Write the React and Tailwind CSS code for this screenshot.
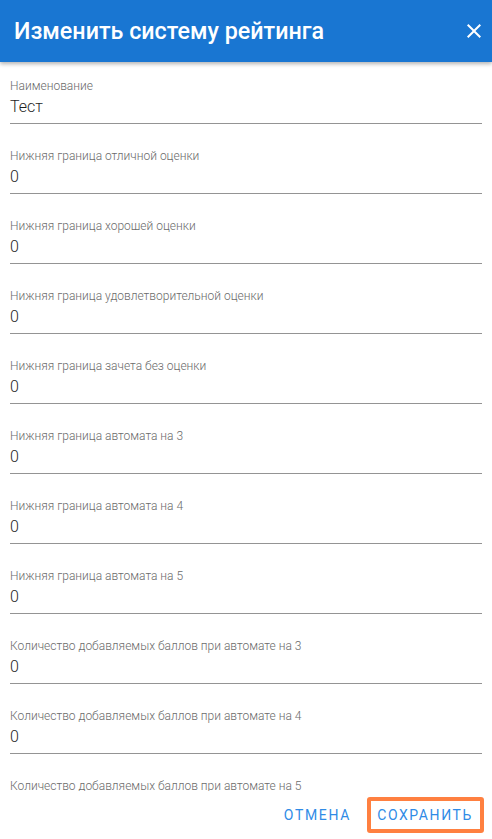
import React from 'react';

const fields = [
  { label: 'Наименование', value: 'Тест' },
  { label: 'Нижняя граница отличной оценки', value: '0' },
  { label: 'Нижняя граница хорошей оценки', value: '0' },
  { label: 'Нижняя граница удовлетворительной оценки', value: '0' },
  { label: 'Нижняя граница зачета без оценки', value: '0' },
  { label: 'Нижняя граница автомата на 3', value: '0' },
  { label: 'Нижняя граница автомата на 4', value: '0' },
  { label: 'Нижняя граница автомата на 5', value: '0' },
  { label: 'Количество добавляемых баллов при автомате на 3', value: '0' },
  { label: 'Количество добавляемых баллов при автомате на 4', value: '0' },
  { label: 'Количество добавляемых баллов при автомате на 5', value: '0' },
];

function Field({ label, value }) {
  return (
    <div className="flex flex-col">
      <label className="text-[12px] leading-[14px] font-light text-[#6b6b6b]">{label}</label>
      <div className="mt-[4px] pb-[7px] text-[16px] leading-[19px] font-light text-[#1f1f1f] border-b border-[#949494]">
        {value}
      </div>
    </div>
  );
}

export default function App() {
  return (
    <div className="h-[839px] w-[492px] flex flex-col bg-white overflow-hidden font-['Roboto',sans-serif]">
      <header className="relative z-10 h-[62px] shrink-0 flex items-center justify-between pl-[14px] pr-[6px] bg-[#1976d2] shadow-[0_2px_4px_rgba(0,0,0,0.3)]">
        <h1 className="text-[23.3px] font-medium text-white">Изменить систему рейтинга</h1>
        <button className="w-[24px] h-[24px] flex items-center justify-center text-white">
          <svg width="24" height="24" viewBox="0 0 24 24" fill="currentColor">
            <path d="M19 6.41L17.59 5 12 10.59 6.41 5 5 6.41 10.59 12 5 17.59 6.41 19 12 13.41 17.59 19 19 17.59 13.41 12z" />
          </svg>
        </button>
      </header>

      <div className="flex-1 overflow-hidden px-[10px] pt-[17px]">
        <div className="flex flex-col gap-[25px]">
          {fields.map(f => (
            <Field key={f.label} label={f.label} value={f.value} />
          ))}
        </div>
      </div>

      <div className="h-[48px] shrink-0 flex items-center justify-end gap-[8px] pr-[8px]">
        <button className="h-[36px] px-[8px] text-[14px] font-normal tracking-[1.7px] uppercase text-[#2f8be6]">
          Отмена
        </button>
        <button className="h-[36px] pl-[6px] pr-[7px] border-4 border-[#ff8040] rounded-[3px] text-[14px] font-normal tracking-[1.6px] uppercase text-[#2f8be6]">
          Сохранить
        </button>
      </div>
    </div>
  );
}
